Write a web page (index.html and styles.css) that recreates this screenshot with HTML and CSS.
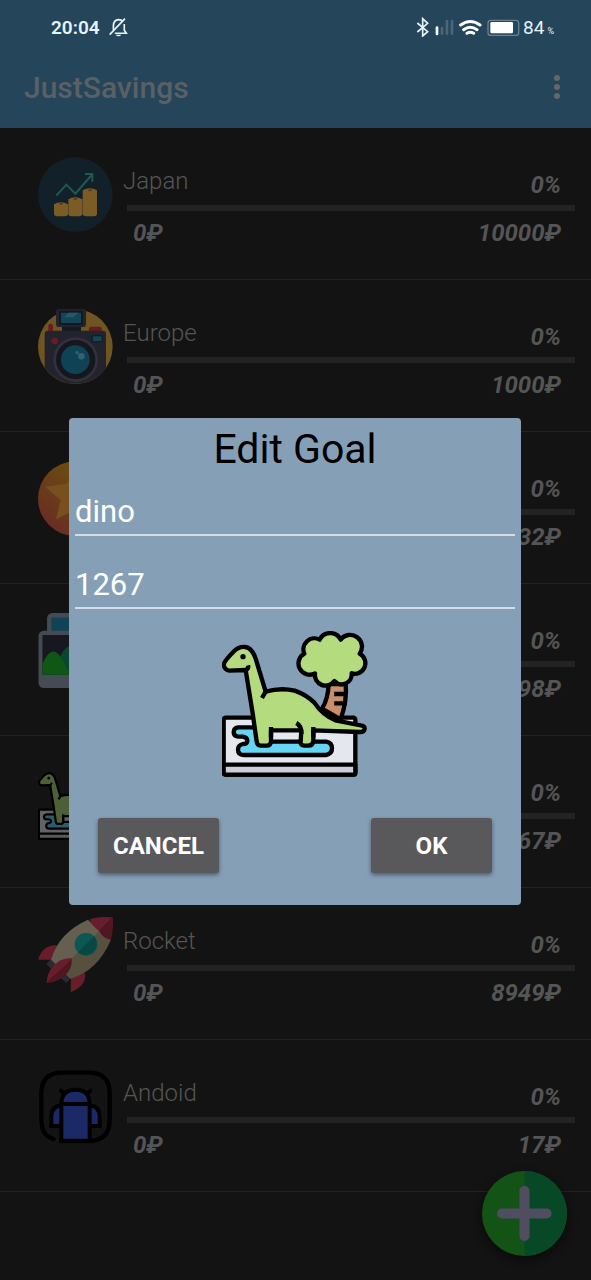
FILE: index.html
```html
<!DOCTYPE html>
<html lang="en">
<head>
<meta charset="utf-8">
<meta name="viewport" content="width=device-width, initial-scale=1">
<title>JustSavings</title>
<link rel="stylesheet" href="styles.css">
</head>
<body>
<svg class="defs" aria-hidden="true">
  <symbol id="dino" viewBox="68 63 438 438">
    <g stroke="#000" stroke-width="13" stroke-linejoin="round" stroke-linecap="round">
      <rect x="73" y="323" width="395" height="171" rx="6" fill="#e4e7ed"/>
      <path d="M73 464H468V488q0 6-6 6H79q-6 0-6-6Z" fill="#cbced6"/>
      <path d="M175 352H116q-13 2-13 14t13 14h14q14 2 14 12t-14 10q-14 4-14 17 0 15 17 16H380q18-3 18-20t-18-20H175Z" fill="#66d5f4"/>
      <path d="M388 222Q386 268 368 296L424 328Q444 270 439 222Z" fill="#c98f6b"/>
      <path d="M411 252H436M411 280H436" stroke-linecap="square"/>
      <path d="M347 190A32 32 0 1 1 315 131A33 33 0 0 1 361 89A35 35 0 0 1 424 89A33 33 0 0 1 481 131A32 32 0 0 1 457 190A30 30 0 0 1 405 213A32 32 0 0 1 347 190Z" fill="#b4dc7e"/>
      <path d="M73 164Q74 154 104 124 119 109 137 111 158 113 169 146L199 245Q244 232 286 242 320 254 345 278 369 315 408 331L484 346Q497 347 496 356 495 366 482 366L342 361V394Q340 408 325 407L315 407Q302 406 304 394L306 361H215V394Q214 407 202 407H184Q173 406 172 394L160 310 139 180 90 182Q75 179 73 164Z" fill="#b4dc7e"/>
      <path d="M199 245 188 264M291 339Q307 348 306 372M215 351V382M342 351V382M139 181Q149 175 146 166" fill="none" stroke-linecap="butt"/>
    </g>
    <circle cx="131" cy="140" r="8"/>
  </symbol>
</svg>

<header class="top">
  <div class="status">
    <span class="clock">20:04</span>
    <svg class="bell" viewBox="326 54 56 56" aria-label="Muted"><g fill="none" stroke="#e4f2fb" stroke-width="5"><path d="M339 91V76Q340 60 354 59 363 59 367 65M371 72V90L377 99H343"/><path d="M328 103 373 56" stroke-width="5"/></g><path d="M346 103H362Q360 108 354 108T346 103Z" fill="#e4f2fb"/></svg>
    <svg class="signals" viewBox="362 48 312 60" aria-label="Bluetooth, signal, Wi-Fi, battery">
      <path d="M366 66 397 92 382 105V53L397 67 366 93" fill="none" stroke="#e4f2fb" stroke-width="5"/>
      <path d="M425 80V99" stroke="#fff" stroke-width="8" stroke-linecap="round"/>
      <path d="M440 81V98M455 60V98M470 60V98" stroke="#4b6678" stroke-width="8" stroke-linecap="round"/>
      <g fill="none" stroke="#fff" stroke-width="9" stroke-linecap="round"><path d="M496 72Q525 51 554 72M505 86Q525 72 545 86M515 97Q525 91 535 97"/></g>
      <rect x="578" y="58" width="92" height="45" rx="8" fill="none" stroke="#688092" stroke-width="4"/>
      <rect x="585" y="63" width="68" height="34" rx="4" fill="#fff"/>
    </svg>
    <span class="battery">84<small>%</small></span>
  </div>
  <div class="appbar">
    <h1>JustSavings</h1>
    <button class="more" aria-label="More options"><i></i><i></i><i></i></button>
  </div>
</header>

<main>
<ul class="goals">
  <li class="goal">
    <svg class="pic" viewBox="54 50 225 225"><circle cx="166" cy="163" r="112" fill="#12202a"/><path d="M109 166 139 133 166 160 215 104M195 101H217V124" fill="none" stroke="#1d5a51" stroke-width="6"/><g fill="#7c5c25"><path d="M102 192Q122 180 144 192V222Q143 228 136 228H110Q102 227 102 222ZM145 177Q165 164 187 177V222Q185 228 178 228H153Q145 227 145 222ZM188 150Q209 137 231 150V222Q230 228 222 228H196Q188 227 188 222Z"/></g><g fill="#5b3a1c"><ellipse cx="123" cy="190" rx="6" ry="3"/><ellipse cx="166" cy="176" rx="6" ry="3"/><ellipse cx="210" cy="150" rx="6" ry="3"/></g></svg>
    <div class="info"><div class="head"><h2>Japan</h2><b>0%</b></div><progress value="0" max="10000" aria-label="Japan"></progress><div class="sums"><b>0₽</b><b>10000₽</b></div></div>
  </li>
  <li class="goal">
    <svg class="pic" viewBox="54 42 225 225"><clipPath id="round"><path d="M54 42H279V154A112 112 0 0 1 54 154Z"/></clipPath><circle cx="166" cy="155" r="112" fill="#6e5522"/><g clip-path="url(#round)"><path d="M85 108V92Q86 86 92 86T99 92V108ZM207 108V100Q208 95 214 95H238Q244 95 245 100V108Z" fill="#6b1b20"/><path d="M126 91H183V112H126Z" fill="#171820"/><rect x="108" y="42" width="90" height="54" rx="7" fill="#22232d"/><rect x="117" y="47" width="72" height="43" rx="4" fill="#151820"/><rect x="123" y="53" width="60" height="31" rx="3" fill="#124657"/><path d="M146 53H176L160 67H132Z" fill="#25596a"/><path d="M74 267V116Q75 107 84 107H250Q258 108 258 116V267Z" fill="#22232d"/><circle cx="104" cy="138" r="10" fill="#6b1b20"/><rect x="214" y="121" width="34" height="21" rx="4" fill="#151820"/><rect x="218" y="124" width="27" height="15" rx="2" fill="#124657"/></g><circle cx="167" cy="194" r="67" fill="#30313c"/><circle cx="167" cy="194" r="59" fill="#15171f"/><circle cx="166" cy="194" r="43" fill="#0f4255"/><g fill="#346171"><circle cx="184" cy="184" r="10"/><circle cx="171" cy="173" r="5"/></g></svg>
    <div class="info"><div class="head"><h2>Europe</h2><b>0%</b></div><progress value="0" max="1000" aria-label="Europe"></progress><div class="sums"><b>0₽</b><b>1000₽</b></div></div>
  </li>
  <li class="goal">
    <svg class="pic" viewBox="54 65 225 225"><defs><linearGradient id="warm" x1="1" y1="0" x2=".2" y2="1"><stop offset=".3" stop-color="#6b4c10"/><stop offset=".8" stop-color="#6a3420"/><stop offset="1" stop-color="#6b2a28"/></linearGradient></defs><circle cx="166" cy="178" r="112" fill="url(#warm)"/><path d="M166 95 186 137 246 144 202 182 214 238 166 211 108 240 122 182 75 142 140 133Z" fill="#78501e"/></svg>
    <div class="info"><div class="head"><h2></h2><b>0%</b></div><progress value="0" max="1" aria-label="Goal 3"></progress><div class="sums"><b></b><b>32₽</b></div></div>
  </li>
  <li class="goal">
    <svg class="pic" viewBox="54 69 225 228"><rect x="80" y="69" width="199" height="160" rx="16" fill="#444b54"/><rect x="93" y="83" width="173" height="60" fill="#104356"/><rect x="54" y="123" width="205" height="174" rx="16" fill="#444b54"/><path d="M66 136H247V257H66Z" fill="#16171f"/><path d="M110 224Q134 160 158 173L210 257H110Z" fill="#0b4630"/><path d="M66 224Q82 186 99 186T132 222L150 257H66Z" fill="#105614"/></svg>
    <div class="info"><div class="head"><h2></h2><b>0%</b></div><progress value="0" max="1" aria-label="Goal 4"></progress><div class="sums"><b></b><b>98₽</b></div></div>
  </li>
  <li class="goal">
    <svg class="pic dim"><use href="#dino"/></svg>
    <div class="info"><div class="head"><h2></h2><b>0%</b></div><progress value="0" max="1267" aria-label="dino"></progress><div class="sums"><b></b><b>67₽</b></div></div>
  </li>
  <li class="goal">
    <svg class="pic" viewBox="54 52 225 225"><path d="M54 180Q69 134 111 137L93 180ZM152 278Q204 256 194 219L153 236Z" fill="#681d2a"/><path d="M92 178 152 236 139 250 79 194Z" fill="#292b34"/><path d="M93 180Q116 99 204 60L238 94 152 237Z" fill="#665f50"/><path d="M238 94 273 120Q233 213 152 237L122 208Z" fill="#57503f"/><path d="M209 59Q235 49 279 53L238 94Q213 76 209 59Z" fill="#681d2a"/><path d="M279 53Q281 89 273 120 250 118 238 94Z" fill="#501621"/><circle cx="198" cy="134" r="34" fill="#0b5753"/><path d="M222 110A34 34 0 0 1 174 158Z" fill="#084842"/><path d="M155 176Q125 172 100 198 82 218 79 251L118 214Z" fill="#681d2a"/><path d="M155 176Q158 205 137 226 118 246 79 251L118 214Z" fill="#501621"/></svg>
    <div class="info"><div class="head"><h2>Rocket</h2><b>0%</b></div><progress value="0" max="8949" aria-label="Rocket"></progress><div class="sums"><b>0₽</b><b>8949₽</b></div></div>
  </li>
  <li class="goal">
    <svg class="pic" viewBox="54 58 225 225"><path d="M101 268Q64 260 64 206V132Q64 69 127 69H207Q269 69 269 132V211Q269 272 207 274H124" fill="none" stroke="#000" stroke-width="13" stroke-linecap="round"/><g fill="#1b2a66" stroke="#000" stroke-width="12"><path d="M124 168Q95 168 94 200V229H124M209 168Q238 168 239 200V229H209"/><path d="M123 123 136 137M211 123 197 137" stroke-linecap="round"/><path d="M124 163H209V273H124ZM124 163Q125 120 167 120T209 163Z"/></g></svg>
    <div class="info"><div class="head"><h2>Andoid</h2><b>0%</b></div><progress value="0" max="17" aria-label="Andoid"></progress><div class="sums"><b>0₽</b><b>17₽</b></div></div>
  </li>
</ul>
</main>

<button class="fab" aria-label="Add goal"><svg viewBox="127 305 254 254"><circle cx="254" cy="432" r="127" fill="#135416"/><path d="M254 305A127 127 0 0 1 254 559Z" fill="#074927"/><path d="M187 432H320M254 365V499" stroke="#504d60" stroke-width="30" stroke-linecap="round"/></svg></button>

<div class="overlay">
  <form class="dialog" role="dialog" aria-labelledby="dialog-title">
    <h2 id="dialog-title">Edit Goal</h2>
    <input type="text" value="dino" aria-label="Goal name">
    <input type="text" inputmode="numeric" value="1267" aria-label="Goal amount">
    <svg class="preview"><use href="#dino"/></svg>
    <div class="actions"><button type="button">CANCEL</button><button type="button">OK</button></div>
  </form>
</div>
</body>
</html>
```

FILE: styles.css
```css
* { box-sizing: border-box; }
body {
  margin: 0;
  min-height: 100vh;
  background: #131313;
  color: #555;
  font-family: Roboto, "Noto Sans", sans-serif;
}
h1, h2 { margin: 0; font-weight: 400; }
button { border: 0; padding: 0; background: none; font: inherit; color: inherit; }
.defs { display: none; }

.top { background: #25455a; }
.status {
  display: flex;
  align-items: center;
  height: 54px;
  padding: 0 37px 0 51px;
  color: #e4f2fb;
}
.clock { font-size: 19px; font-weight: 600; }
.bell { width: 19px; height: 19px; margin-left: 9px; }
.signals { width: 104px; height: 20px; margin-left: auto; }
.battery { margin-left: 3px; font-size: 19px; }
.battery small { margin-left: 3px; font-size: 9px; }
.appbar {
  display: flex;
  align-items: center;
  justify-content: space-between;
  height: 74px;
  padding: 0 31px 6px 24px;
}
h1 { font-size: 30px; font-weight: 500; line-height: 40px; color: #5a6064; }
.more { display: grid; gap: 3px; padding-bottom: 2px; }
.more i { width: 6px; height: 6px; border-radius: 50%; background: #666; }

.goals { margin: 0; padding: 0; list-style: none; }
.goal {
  display: flex;
  gap: 10px;
  padding: 29px 16px 24px 38px;
  border-bottom: 1px solid #222;
}
.pic { flex: none; width: 75px; height: 75px; }
.dim { filter: brightness(0.43); }
.info { flex: 1; min-width: 0; }
.head { display: flex; align-items: flex-end; justify-content: space-between; height: 48px; }
.head h2 { font-size: 24px; font-weight: 300; line-height: 48px; }
.goal b { font-size: 24px; font-style: italic; font-weight: 700; }
.head b { padding-right: 14px; line-height: 40px; }
progress {
  display: block;
  appearance: none;
  width: calc(100% - 4px);
  height: 6px;
  margin-left: 4px;
  border: 0;
  background: #232323;
}
progress::-webkit-progress-bar { background: #232323; }
.sums {
  display: flex;
  justify-content: space-between;
  padding: 0 14px 0 10px;
  line-height: 44px;
}

.fab {
  position: fixed;
  right: 24px;
  bottom: 24px;
  width: 85px;
  height: 85px;
  border-radius: 50%;
  box-shadow: 0 4px 10px #0a0a0a;
}
.fab svg { display: block; width: 100%; }

.overlay {
  position: fixed;
  inset: 0;
  display: flex;
  align-items: center;
  justify-content: center;
  padding: 43px 70px 0 69px;
}
.dialog {
  display: flex;
  flex-direction: column;
  flex: 1;
  max-width: 480px;
  padding: 0 6px 32px;
  border-radius: 4px;
  background: #859fb7;
}
.dialog h2 { height: 60px; font-size: 41px; line-height: 62px; text-align: center; color: #000; }
.dialog input {
  width: 100%;
  height: 58px;
  padding: 10px 0 0;
  margin-bottom: 15px;
  border: 0;
  border-bottom: 2px solid #d3dde8;
  border-radius: 0;
  outline: 0;
  background: none;
  color: #fff;
  font: 400 31px Roboto, "Noto Sans", sans-serif;
}
.preview { align-self: center; width: 146px; height: 146px; margin-top: 7px; }
.actions { display: flex; justify-content: space-between; margin-top: 41px; padding: 0 23px; }
.actions button {
  width: 121px;
  height: 55px;
  border-radius: 3px;
  background: #59595b;
  box-shadow: 0 2px 4px #4d5d6c;
  color: #fff;
  font-size: 24px;
  font-weight: 700;
}
```
